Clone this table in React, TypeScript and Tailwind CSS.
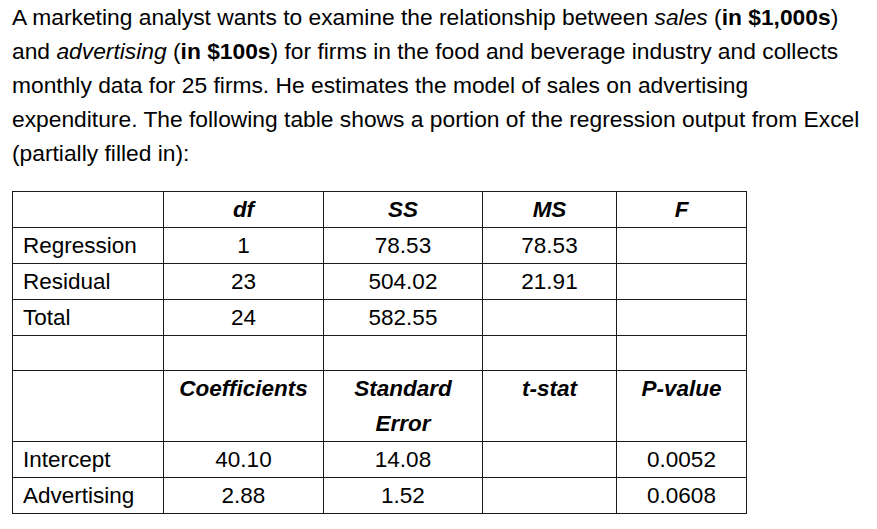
import React from 'react';

const cell = 'border border-[#1a1a1a] h-[35px] p-0 align-middle';

const App: React.FC = () => {
  return (
    <div className="bg-white w-[877px] h-[529px] text-black font-['Liberation_Sans',Arial,sans-serif]">
      <p className="pl-[12px] pt-0 text-[22.8px] leading-[34px] whitespace-nowrap">
        A marketing analyst wants to examine the relationship between <i>sales</i> (<b>in $1,000s</b>)
        <br />
        and <i>advertising</i> (<b>in $100s</b>) for firms in the food and beverage industry and collects
        <br />
        monthly data for 25 firms. He estimates the model of sales on advertising
        <br />
        expenditure. The following table shows a portion of the regression output from Excel
        <br />
        (partially filled in):
      </p>

      <table className="ml-[12px] mt-[21px] border-collapse table-fixed text-[22.5px] leading-[35px]">
        <colgroup>
          <col className="w-[151px]" />
          <col className="w-[160px]" />
          <col className="w-[159px]" />
          <col className="w-[134px]" />
          <col className="w-[130px]" />
        </colgroup>
        <tbody>
          <tr className="text-center font-bold italic">
            <td className={cell}></td>
            <td className={cell}>df</td>
            <td className={cell}>SS</td>
            <td className={cell}>MS</td>
            <td className={cell}>F</td>
          </tr>
          <tr className="text-center">
            <td className={`${cell} text-left pl-[10px]`}>Regression</td>
            <td className={cell}>1</td>
            <td className={cell}>78.53</td>
            <td className={cell}>78.53</td>
            <td className={cell}></td>
          </tr>
          <tr className="text-center">
            <td className={`${cell} text-left pl-[10px]`}>Residual</td>
            <td className={cell}>23</td>
            <td className={cell}>504.02</td>
            <td className={cell}>21.91</td>
            <td className={cell}></td>
          </tr>
          <tr className="text-center">
            <td className={`${cell} text-left pl-[10px]`}>Total</td>
            <td className={cell}>24</td>
            <td className={cell}>582.55</td>
            <td className={cell}></td>
            <td className={cell}></td>
          </tr>
          <tr>
            <td className={cell}></td>
            <td className={cell}></td>
            <td className={cell}></td>
            <td className={cell}></td>
            <td className={cell}></td>
          </tr>
          <tr className="text-center font-bold italic">
            <td className={`${cell} align-top`}></td>
            <td className={`${cell} align-top`}>Coefficients</td>
            <td className={`${cell} align-top`}>Standard<br />Error</td>
            <td className={`${cell} align-top`}>t-stat</td>
            <td className={`${cell} align-top`}>P-value</td>
          </tr>
          <tr className="text-center">
            <td className={`${cell} text-left pl-[10px]`}>Intercept</td>
            <td className={cell}>40.10</td>
            <td className={cell}>14.08</td>
            <td className={cell}></td>
            <td className={cell}>0.0052</td>
          </tr>
          <tr className="text-center">
            <td className={`${cell} text-left pl-[10px]`}>Advertising</td>
            <td className={cell}>2.88</td>
            <td className={cell}>1.52</td>
            <td className={cell}></td>
            <td className={cell}>0.0608</td>
          </tr>
        </tbody>
      </table>
    </div>
  );
};

export default App;
